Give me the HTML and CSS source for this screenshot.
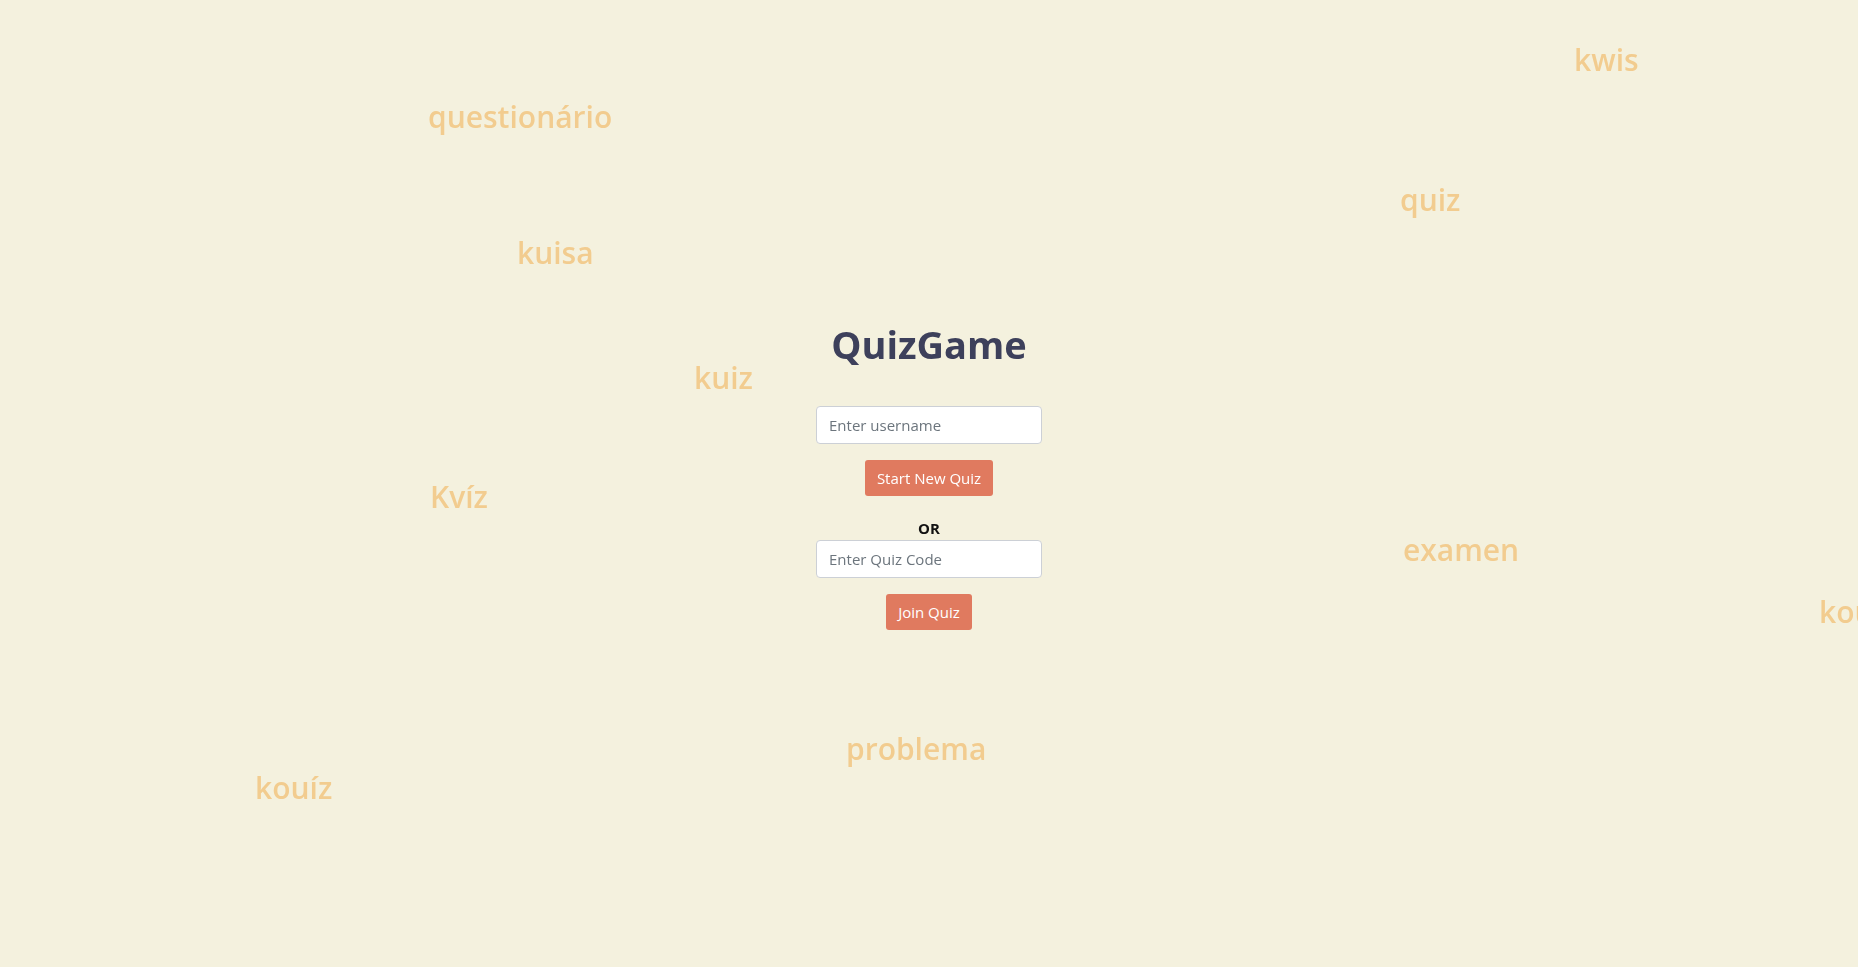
FILE: index.html
```html
<!DOCTYPE html>
<html lang="en">
<head>
<meta charset="utf-8">
<title>QuizGame</title>
<link rel="stylesheet" href="styles.css">
</head>
<body>
<div class="bg-words">
  <span class="word" style="left:428px;top:97px">questionário</span>
  <span class="word" style="left:1574px;top:40px">kwis</span>
  <span class="word" style="left:1400px;top:180px">quiz</span>
  <span class="word" style="left:517px;top:233px">kuisa</span>
  <span class="word" style="left:694px;top:358px">kuiz</span>
  <span class="word" style="left:430px;top:477px">Kvíz</span>
  <span class="word" style="left:1403px;top:530px">examen</span>
  <span class="word" style="left:1819px;top:592px">kouíz</span>
  <span class="word" style="left:846px;top:729px">problema</span>
  <span class="word" style="left:255px;top:768px">kouíz</span>
</div>
<main class="home">
  <h1 class="title">QuizGame</h1>
  <input class="field" type="text" placeholder="Enter username">
  <button class="btn">Start New Quiz</button>
  <p class="or">OR</p>
  <input class="field" type="text" placeholder="Enter Quiz Code">
  <button class="btn">Join Quiz</button>
</main>
</body>
</html>
```
FILE: styles.css
```css
* { box-sizing: border-box; }
html, body { height: 100%; }
body {
  margin: 0;
  background: #f4f1de;
  font-family: "Open Sans", "Noto Sans", sans-serif;
  overflow: hidden;
}
.bg-words {
  position: fixed;
  inset: 0;
  pointer-events: none;
}
.word {
  position: absolute;
  font-size: 30px;
  font-weight: 600;
  line-height: 40px;
  color: #f2cc8f;
  white-space: nowrap;
}
.home {
  position: relative;
  display: flex;
  flex-direction: column;
  align-items: center;
  padding-top: 319px;
}
.title {
  margin: 0 0 37px;
  font-size: 38px;
  line-height: 50px;
  font-weight: 700;
  color: #3d405b;
}
.field {
  width: 226px;
  height: 38px;
  padding: 0 12px;
  border: 1px solid #ccd0d6;
  border-radius: 4px;
  background: #fff;
  font-family: inherit;
  font-size: 15px;
  color: #333;
}
.field::placeholder { color: #6c757d; }
.btn {
  margin-top: 16px;
  height: 36px;
  padding: 0 12px;
  border: none;
  border-radius: 3px;
  background: #e07a5f;
  color: #fff;
  font-family: inherit;
  font-size: 15px;
}
.or {
  margin: 21px 0 1px;
  font-size: 15px;
  line-height: 22px;
  font-weight: 700;
  color: #111;
}
```
